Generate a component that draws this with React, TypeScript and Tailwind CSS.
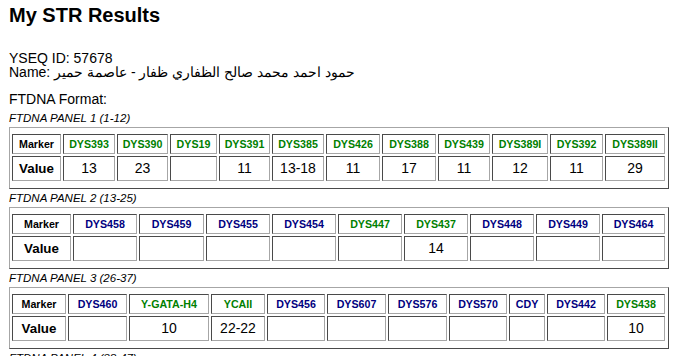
import React from "react";

type Col = { name: string; value: string; color: "g" | "b" | "k" };

const G = "text-[#008000]";
const B = "text-[#000080]";

const cellBorder =
  "flex items-center justify-center border border-t-[#4a4a4a] border-l-[#4a4a4a] border-r-[#a6a6a6] border-b-[#a6a6a6]";

const panels: { label: string; cols: string; items: Col[] }[] = [
  {
    label: "FTDNA PANEL 1 (1-12)",
    cols: "grid-cols-[49px_52px_51px_47px_51px_52px_54px_54px_52px_56px_53px_60px]",
    items: [
      { name: "DYS393", value: "13", color: "g" },
      { name: "DYS390", value: "23", color: "g" },
      { name: "DYS19", value: "", color: "g" },
      { name: "DYS391", value: "11", color: "g" },
      { name: "DYS385", value: "13-18", color: "g" },
      { name: "DYS426", value: "11", color: "g" },
      { name: "DYS388", value: "17", color: "g" },
      { name: "DYS439", value: "11", color: "g" },
      { name: "DYS389I", value: "12", color: "g" },
      { name: "DYS392", value: "11", color: "g" },
      { name: "DYS389II", value: "29", color: "g" },
    ],
  },
  {
    label: "FTDNA PANEL 2 (13-25)",
    cols: "grid-cols-[59px_64px_65px_64px_64px_64px_64px_64px_64px_63px]",
    items: [
      { name: "DYS458", value: "", color: "b" },
      { name: "DYS459", value: "", color: "b" },
      { name: "DYS455", value: "", color: "b" },
      { name: "DYS454", value: "", color: "b" },
      { name: "DYS447", value: "", color: "g" },
      { name: "DYS437", value: "14", color: "g" },
      { name: "DYS448", value: "", color: "b" },
      { name: "DYS449", value: "", color: "b" },
      { name: "DYS464", value: "", color: "b" },
    ],
  },
  {
    label: "FTDNA PANEL 3 (26-37)",
    cols: "grid-cols-[54px_59px_80px_54px_58px_59px_59px_58px_36px_58px_58px]",
    items: [
      { name: "DYS460", value: "", color: "b" },
      { name: "Y-GATA-H4", value: "10", color: "g" },
      { name: "YCAII", value: "22-22", color: "g" },
      { name: "DYS456", value: "", color: "b" },
      { name: "DYS607", value: "", color: "b" },
      { name: "DYS576", value: "", color: "b" },
      { name: "DYS570", value: "", color: "b" },
      { name: "CDY", value: "", color: "b" },
      { name: "DYS442", value: "", color: "b" },
      { name: "DYS438", value: "10", color: "g" },
    ],
  },
  {
    label: "FTDNA PANEL 4 (38-47)",
    cols: "grid-cols-[54px_64px_64px_72px_64px_64px_64px_64px_72px_64px]",
    items: [
      { name: "DYS531", value: "", color: "b" },
      { name: "DYS578", value: "", color: "b" },
      { name: "DYF395S1", value: "", color: "b" },
      { name: "DYS590", value: "", color: "b" },
      { name: "DYS537", value: "", color: "b" },
      { name: "DYS641", value: "", color: "b" },
      { name: "DYS472", value: "", color: "b" },
      { name: "DYF406S1", value: "", color: "b" },
      { name: "DYS511", value: "", color: "b" },
    ],
  },
];

function Panel({ label, cols, items }: { label: string; cols: string; items: Col[] }) {
  return (
    <div>
      <div className="italic text-[11.5px] leading-[18px] h-[18px]">{label}</div>
      <div className="w-fit h-[62px] border border-t-[#a6a6a6] border-l-[#a6a6a6] border-r-[#4a4a4a] border-b-[#4a4a4a] pt-[6px] pb-[7px] pl-[2px] pr-[3px]">
        <div className={`grid ${cols} gap-[2px]`}>
          <div className={`${cellBorder} h-[20px] text-[10.67px] font-bold`}>Marker</div>
          {items.map((it) => (
            <div
              key={it.name}
              className={`${cellBorder} h-[20px] text-[10.67px] font-bold ${it.color === "g" ? G : B}`}
            >
              {it.name}
            </div>
          ))}
          <div className={`${cellBorder} h-[25px] text-[13.33px] font-bold`}>Value</div>
          {items.map((it) => (
            <div key={it.name + "-v"} className={`${cellBorder} h-[25px] text-[14px]`}>
              {it.value}
            </div>
          ))}
        </div>
      </div>
    </div>
  );
}

export default function App() {
  return (
    <div className="w-[678px] h-[356px] overflow-hidden bg-white text-black font-['Liberation_Sans',Arial,sans-serif] pl-[9px] pt-[4px]">
      <h1 className="text-[20px] leading-[23px] font-bold h-[23px]">My STR Results</h1>
      <div className="mt-[24px] text-[14px] leading-[14px]">
        <div>YSEQ ID: 57678</div>
        <div>Name: حمود احمد محمد صالح الظفاري ظفار - عاصمة حمير</div>
      </div>
      <div className="mt-[12px] text-[14px] leading-[16px]">FTDNA Format:</div>
      <div className="mt-[2px]">
        {panels.map((p) => (
          <Panel key={p.label} {...p} />
        ))}
      </div>
    </div>
  );
}
